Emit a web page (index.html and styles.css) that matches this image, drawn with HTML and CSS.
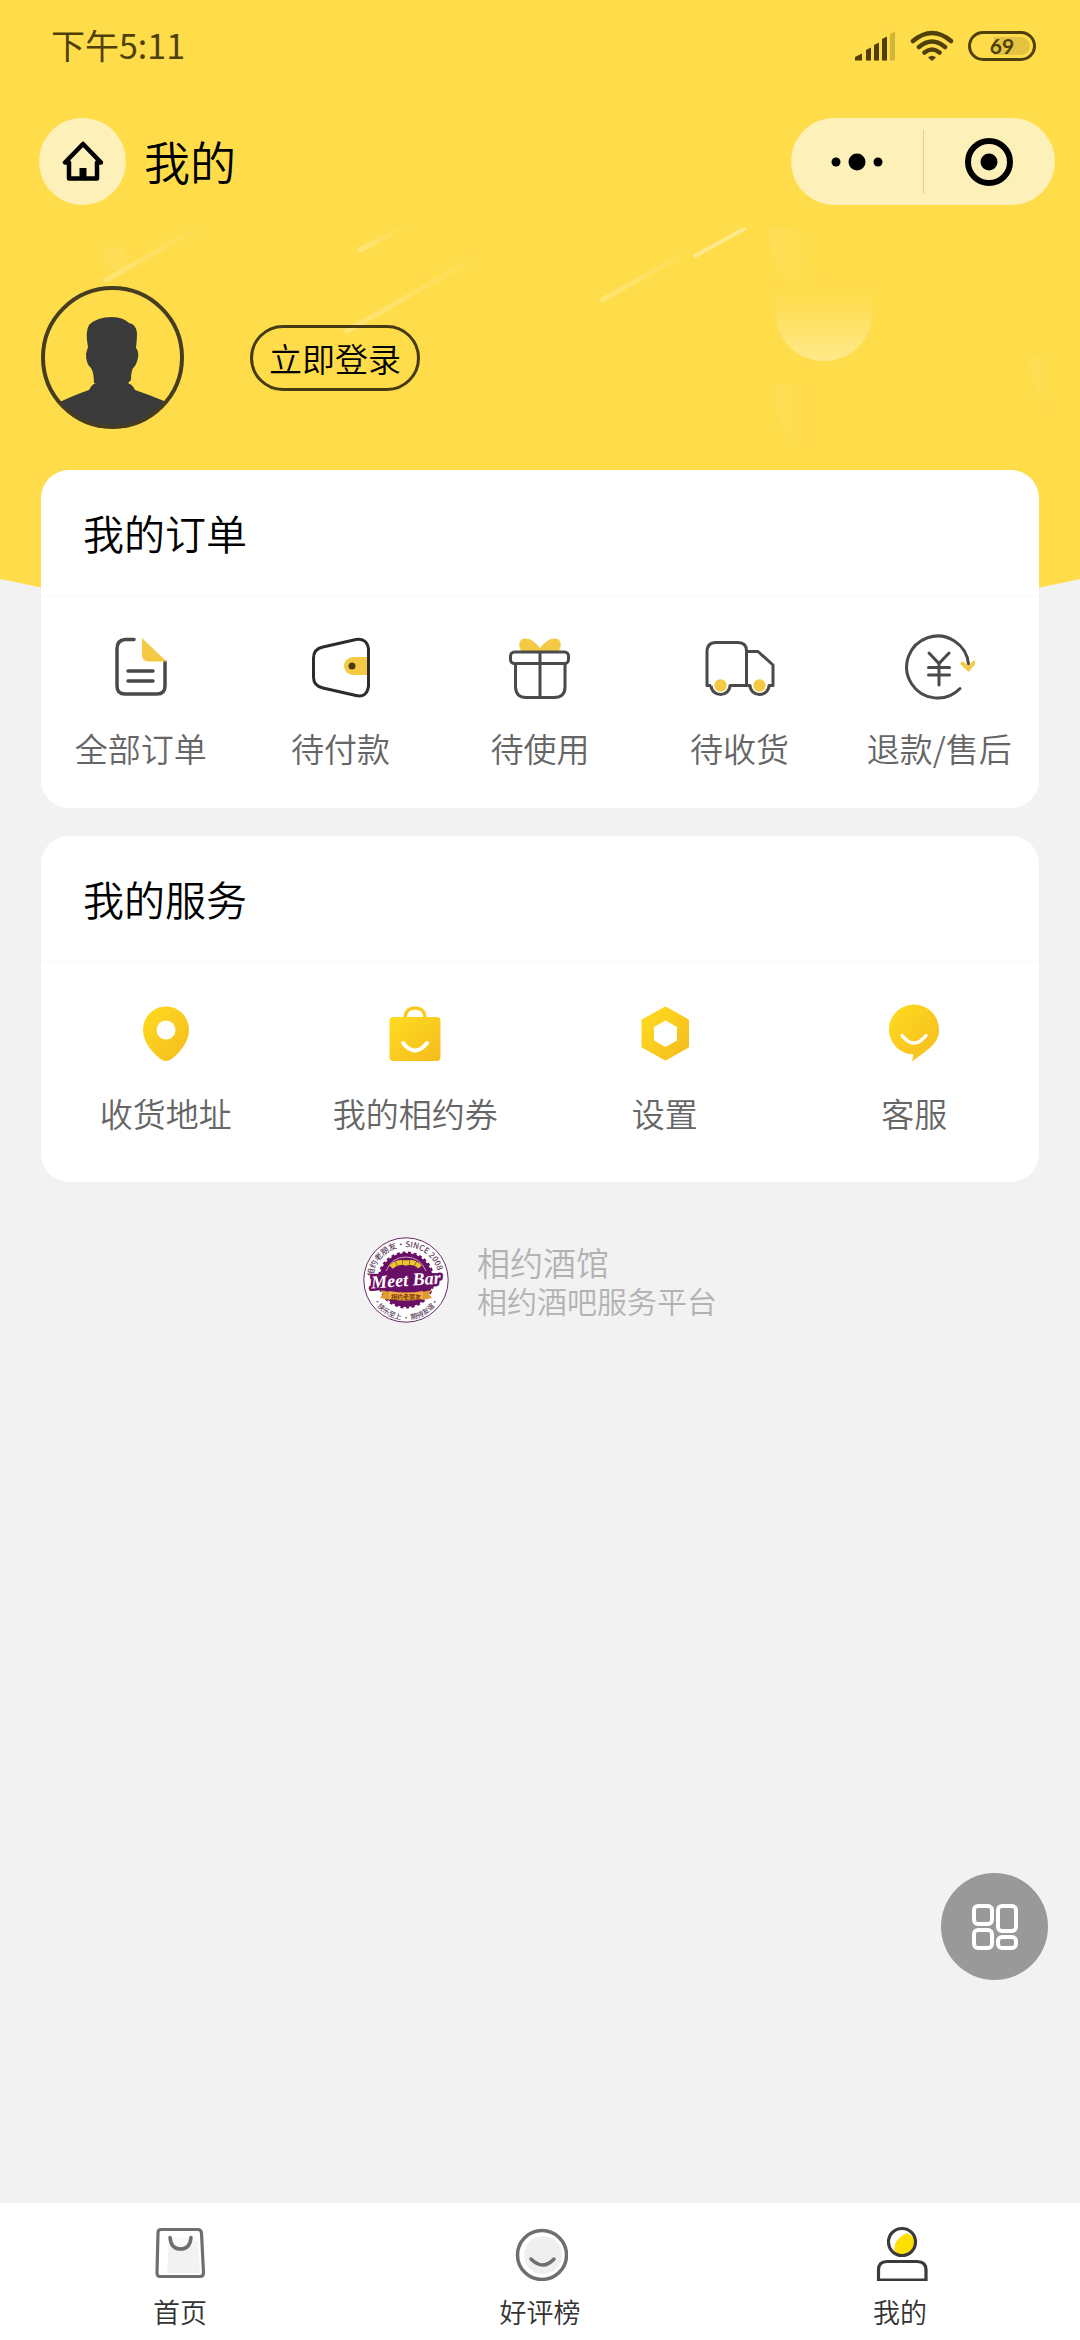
FILE: index.html
```
<!DOCTYPE html>
<html lang="zh-CN">
<head>
  <meta charset="UTF-8">
  <title>我的</title>
  <meta name="viewport" content="width=device-width, initial-scale=1.0">
  <link rel="stylesheet" href="styles.css">
</head>
<body>

<!-- Yellow header background -->
<svg class="header-bg" viewBox="0 0 1080 640" preserveAspectRatio="none" aria-hidden="true">
  <defs>
    <linearGradient id="ball" x1="0" y1="0" x2="0" y2="1">
      <stop offset="0" stop-color="#fff" stop-opacity="0"/>
      <stop offset="0.3" stop-color="#fff" stop-opacity="0.08"/>
      <stop offset="1" stop-color="#fff" stop-opacity="0.36"/>
    </linearGradient>
    <linearGradient id="streak" x1="0" y1="1" x2="1" y2="0">
      <stop offset="0" stop-color="#fff" stop-opacity="0.25"/>
      <stop offset="1" stop-color="#fff" stop-opacity="0.04"/>
    </linearGradient>
    <linearGradient id="haze" x1="0" y1="0" x2="1" y2="0">
      <stop offset="0" stop-color="#fff" stop-opacity="0.08"/>
      <stop offset="1" stop-color="#fff" stop-opacity="0"/>
    </linearGradient>
  </defs>
  <path d="M0 0H1080V579Q540 697 0 579Z" fill="#ffdc49"/>
  <g stroke="url(#streak)" stroke-width="5" stroke-linecap="round">
    <path d="M106 280L192 231"/>
    <path d="M360 250L400 229"/>
    <path d="M347 331L475 258"/>
    <path d="M602 300L688 252"/>
    <path d="M695 256L744 229" stroke="#fff" stroke-opacity="0.36" stroke-width="4"/>
  </g>
  <circle cx="115" cy="258" r="12" fill="#fff" fill-opacity="0.08"/>
  <path d="M775 285H873V312A49 49 0 0 1 775 312Z" fill="url(#ball)"/>
  <path d="M769 228H800Q800 262 830 284H792Q769 266 769 228Z" fill="url(#haze)"/>
  <path d="M775 384H800L815 418L800 446Q776 436 775 384Z" fill="url(#haze)"/>
  <path d="M1030 360Q1042 350 1056 364V412Q1032 398 1030 360Z" fill="url(#haze)"/>
</svg>

<header>
  <div class="status-bar">
    <span class="time">下午5:11</span>
    <div class="status-icons">
      <svg width="42" height="32" viewBox="0 0 42 32" fill="#4f3f08">
        <path d="M1 30.500V27L8 23.500V30.500ZM12 20L17 17.500V30.500H12ZM20 15L25 12.500V30.500H20ZM28 9L33 6.500V30.500H28Z"/>
        <path d="M36 4L41 1.500V30.500H36Z" opacity="0.25"/>
      </svg>
      <svg width="44" height="32" viewBox="0 0 44 32" fill="none" stroke="#4f3f08" stroke-width="4.500" stroke-linecap="round">
        <path d="M3 11Q22 -5 41 11M9 17Q22 6 35 17M14.500 22.500Q22 16.500 29.500 22.500"/>
        <path d="M22 31L18 27.500Q22 24 26 27.500Z" fill="#4f3f08" stroke="none"/>
      </svg>
      <span class="battery">69</span>
    </div>
  </div>

  <div class="navbar">
    <button class="home-btn" aria-label="返回首页">
      <svg width="44" height="42" viewBox="0 0 44 42">
        <path d="M22 3L4 21.500H8V37.500H36V21.500H40Z" fill="none" stroke="#000" stroke-width="4.500" stroke-linejoin="round"/>
        <rect x="18.500" y="27" width="7" height="11"/>
      </svg>
    </button>
    <h1>我的</h1>
    <div class="capsule">
      <button aria-label="更多">
        <svg width="54" height="20" viewBox="0 0 54 20"><circle cx="6" cy="10" r="4.500"/><circle cx="27" cy="10" r="8.500"/><circle cx="48" cy="10" r="4.500"/></svg>
      </button>
      <button aria-label="关闭">
        <svg width="50" height="50" viewBox="0 0 50 50"><circle cx="25" cy="25" r="21" fill="none" stroke="#000" stroke-width="6"/><circle cx="25" cy="25" r="8.500"/></svg>
      </button>
    </div>
  </div>
</header>

<main>
  <div class="profile">
    <svg class="avatar" viewBox="0 0 143 143">
      <defs><clipPath id="face"><circle cx="71.500" cy="71.500" r="71"/></clipPath></defs>
      <path clip-path="url(#face)" fill="#3a3a3a" d="M53 97Q53 87 50 82Q45 78 45 68Q46 64 47 61Q44 46 48 39Q56 31 71 31Q82 31 88 37Q95 38 96 47Q96 54 95 62Q98 65 97 72Q95 80 92 82Q90 86 90 94L87 97Q92 99 94 104Q109 109 123 115L143 123V143H0V123L21 115Q36 108 48 104Q51 98 55 97Z"/>
      <circle cx="71.500" cy="71.500" r="69.500" fill="none" stroke="#453d22" stroke-width="4"/>
    </svg>
    <button class="login-btn">立即登录</button>
  </div>

  <!-- Orders -->
  <section class="card">
    <h2>我的订单</h2>
    <div class="orders">
      <a href="#">
        <svg viewBox="0 0 72 72" fill="none" stroke="#4a4a4a" stroke-width="3.500" stroke-linecap="round">
          <path d="M29 8.500H20Q12 9 12 18V55Q12 63 20 63H52Q60 63 60 55V31"/>
          <path d="M23 40H48M23 50H48"/>
          <path d="M37 7L61.500 30.500H44Q37 30 37 24Z" fill="#f4c944" stroke="none"/>
        </svg>
        <span>全部订单</span>
      </a>
      <a href="#">
        <svg viewBox="0 0 72 72" fill="none" stroke="#2c2c2c" stroke-width="3">
          <path d="M63 26V44H49A9 9 0 0 1 49 26Z" fill="#f4c944" stroke="none"/>
          <path d="M19 16L52 8.500Q63 7 64.500 18V55Q63 67 52 64.500L19 57Q9.500 55 9.500 46V27Q9.500 18 19 16Z"/>
          <circle cx="48" cy="35" r="3.500" fill="#4a3c10" stroke="none"/>
        </svg>
        <span>待付款</span>
      </a>
      <a href="#">
        <svg viewBox="0 0 72 72" fill="none" stroke="#4a4a4a" stroke-width="3">
          <path d="M36 20H17Q13 12 18 8Q27 5 36 17Q45 5 54 8Q59 12 55 20Z" fill="#f4c944" stroke="none"/>
          <rect x="6.500" y="21" width="58" height="11.500" rx="4"/>
          <path d="M11.500 33V56Q12 66.500 22 66.500H50Q61 66.500 61 56V33M36 21V66"/>
        </svg>
        <span>待使用</span>
      </a>
      <a href="#">
        <svg viewBox="0 0 72 72" fill="none" stroke="#4a4a4a" stroke-width="3" stroke-linejoin="round">
          <path d="M7 54.500H3V21Q3 11.500 12 11.500H34Q42.500 11.500 42.500 20V54.500M42.500 20.500H54L69 34V54.500H65A9.500 9 0 0 1 46 54.500H26A9.500 9 0 0 1 7 54.500"/>
          <circle cx="16.500" cy="54.500" r="6.200" fill="#f4c944" stroke="none"/>
          <circle cx="55.500" cy="54.500" r="6.200" fill="#f4c944" stroke="none"/>
        </svg>
        <span>待收货</span>
      </a>
      <a href="#">
        <svg viewBox="0 0 72 72" fill="none" stroke="#4a4a4a" stroke-width="3" stroke-linecap="round">
          <path d="M57 57.500A31 31 0 1 1 65.500 33"/>
          <path d="M26 22L36 32.500L46 22M36 32.500V54M25.500 36.500H46.500M25.500 44H46.500"/>
          <path d="M59.500 32.500L65.500 38L71 31.500" stroke="#f4c944" stroke-width="4"/>
        </svg>
        <span>退款/售后</span>
      </a>
    </div>
  </section>

  <!-- Services -->
  <section class="card">
    <h2>我的服务</h2>
    <div class="services">
      <a href="#">
        <svg viewBox="0 0 60 60">
          <defs><linearGradient id="gold" x1="0" y1="0" x2="1" y2="1"><stop offset="0" stop-color="#ffdc20"/><stop offset="1" stop-color="#f5bb1e"/></linearGradient></defs>
          <path fill="url(#gold)" d="M30 3.500C43 3.500 53 14 53 27C53 39 43 51 34 57Q30 59 26 57C17 51 7 39 7 27C7 14 17 3.500 30 3.500Z"/>
          <circle cx="30" cy="27" r="9.500" fill="#fff"/>
        </svg>
        <span>收货地址</span>
      </a>
      <a href="#">
        <svg viewBox="0 0 60 60">
          <path d="M20 17V14Q21 5 30 5Q39 5 40 14V17" fill="none" stroke="#f9cb20" stroke-width="3.500"/>
          <rect x="4.500" y="14" width="51" height="44" rx="4" fill="url(#gold)"/>
          <path d="M22 14Q23 7 30 7Q37 7 38 14Z" fill="#fff"/>
          <path d="M18 40Q30 55 42 40" fill="none" stroke="#fff" stroke-width="4" stroke-linecap="round"/>
        </svg>
        <span>我的相约券</span>
      </a>
      <a href="#">
        <svg viewBox="0 0 60 60">
          <path fill="url(#gold)" stroke="url(#gold)" stroke-width="3" stroke-linejoin="round" d="M30.500 5L52.500 17.500V43.500L30.500 56L8 43.500V17.500Z"/>
          <path fill="#fff" stroke="#fff" stroke-width="2" stroke-linejoin="round" d="M30.500 18.500L41 24.500V37L30.500 43L20 37V24.500Z"/>
        </svg>
        <span>设置</span>
      </a>
      <a href="#">
        <svg viewBox="0 0 60 60">
          <path fill="url(#gold)" d="M30 1.500A25 25 0 0 1 55 27C55 41 43 47 28 58.500L29.500 51.500A25 25 0 0 1 5 27A25 25 0 0 1 30 1.500Z"/>
          <path d="M18 32.500Q30 47.500 42 32.500" fill="none" stroke="#fff" stroke-width="3.500" stroke-linecap="round"/>
        </svg>
        <span>客服</span>
      </a>
    </div>
  </section>

  <div class="brand">
    <svg class="brand-logo" viewBox="0 0 86 86">
      <defs>
        <path id="arcTop" d="M10 43A33 33 0 0 1 76 43"/>
        <path id="arcBottom" d="M6 46A37 37 0 0 0 80 46"/>
      </defs>
      <circle cx="43" cy="43" r="42.200" fill="#fff" stroke="#6b2a6b"/>
      <circle cx="43" cy="43" r="27" fill="#6a0f66"/>
      <circle cx="43" cy="43" r="27" fill="none" stroke="#6a0f66" stroke-width="3" stroke-dasharray="3 2.600"/>
      <path d="M23 34Q29 20 43 20Q57 20 63 34" fill="none" stroke="#c9a2c6"/>
      <path d="M28 30Q34 24 43 26Q52 24 57 30" fill="none" stroke="#e8c728" stroke-width="5" stroke-dasharray="6 0.500"/>
      <text class="logo-ring"><textPath href="#arcTop" startOffset="3">相约老朋友·SINCE 2008</textPath></text>
      <text class="logo-ring logo-ring-small"><textPath href="#arcBottom" startOffset="50%" text-anchor="middle">·快乐至上 · 期待友谊·</textPath></text>
      <path d="M17 53L27 55V63L17 61L20 57ZM69 53L59 55V63L69 61L66 57Z" fill="#e09a34"/>
      <path d="M26 54Q43 57 60 54V62Q43 65 26 62Z" fill="#f4ad3d"/>
      <text class="logo-name" x="43" y="49" text-anchor="middle" transform="rotate(-4 43 46)">Meet Bar</text>
      <text class="logo-ribbon" x="43" y="61.500" text-anchor="middle">相约老朋友</text>
    </svg>
    <div class="brand-text">
      <p class="brand-name">相约酒馆</p>
      <p class="brand-desc">相约酒吧服务平台</p>
    </div>
  </div>
</main>

<button class="fab" aria-label="快捷菜单">
  <svg width="46" height="46" viewBox="0 0 46 46" fill="none" stroke="#fff" stroke-width="4">
    <rect x="2" y="2" width="18" height="18" rx="4"/>
    <rect x="26" y="2" width="18" height="25" rx="4"/>
    <rect x="2" y="26" width="18" height="18" rx="4"/>
    <rect x="26" y="33" width="18" height="11" rx="4"/>
  </svg>
</button>

<nav class="tabbar">
  <a href="#">
    <svg viewBox="0 0 56 56" fill="none" stroke="#6e6e6e" stroke-width="3.200" stroke-linecap="round">
      <path d="M17 16H46L48 48H15Z" fill="#f3f2f2" stroke="none"/>
      <path d="M9 4.500H46Q49 4.500 49.500 8L51.500 48Q51.500 51.500 48 51.500H8Q5 51.500 5 48L6 8Q6 4.500 9 4.500Z"/>
      <path d="M18 12.500Q19 24 28.500 24Q38 24 39 12.500" fill="#fafafa" stroke-width="3.500"/>
    </svg>
    <span>首页</span>
  </a>
  <a href="#">
    <svg viewBox="0 0 56 56" fill="none" stroke="#6e6e6e" stroke-width="3.500" stroke-linecap="round">
      <circle cx="31" cy="30" r="19" fill="#efefef" stroke="none"/>
      <circle cx="30" cy="30" r="24.500"/>
      <path d="M19 34Q31 46 42 34"/>
    </svg>
    <span>好评榜</span>
  </a>
  <a href="#" aria-current="page">
    <svg viewBox="0 0 56 56" fill="none" stroke="#3a3a3a" stroke-width="3.200">
      <path d="M23 27Q20 15 35 8Q43 12 43 18Q41 29 30 30Q26 30 23 27Z" fill="#fddf02" stroke="none"/>
      <circle cx="30" cy="17" r="13.500"/>
      <path d="M6.500 55V45Q6.500 36.500 15 36.500H45Q54 36.500 54 45V55Z"/>
    </svg>
    <span>我的</span>
  </a>
</nav>

</body>
</html>
```
FILE: styles.css
```
* {
  box-sizing: border-box;
}

body {
  font-family: "Noto Sans CJK SC", "Noto Sans", sans-serif;
  font-weight: 350;
  margin: 0;
  min-height: 100vh;
  display: flex;
  flex-direction: column;
  position: relative;
  background-color: #f2f2f2;
  color: #000;
}

h1,
h2,
p {
  margin: 0;
  font-weight: 350;
}

a {
  color: inherit;
  text-decoration: none;
}

button {
  font-family: inherit;
  font-weight: 350;
  color: #000;
  padding: 0;
  border: none;
  background: none;
  cursor: pointer;
}

svg {
  display: block;
}

.header-bg {
  position: absolute;
  top: 0;
  left: 0;
  width: 100%;
  height: 640px;
  z-index: -1;
}

/* Status bar */
.status-bar {
  display: flex;
  justify-content: space-between;
  align-items: center;
  height: 92px;
  padding: 0 44px 0 51px;
}

.time {
  font-size: 34px;
  font-weight: 400;
  line-height: 48px;
  padding-bottom: 2px;
  color: #4f3f08;
}

.status-icons {
  display: flex;
  align-items: center;
  gap: 14px;
}

.battery {
  width: 68px;
  height: 30px;
  border: 3px solid #4f3f08;
  border-radius: 15px;
  background: linear-gradient(to right, transparent 35%, #e3c33f 35%) content-box;
  padding: 3px;
  font-family: Lato, sans-serif;
  font-size: 21px;
  font-weight: 700;
  line-height: 18px;
  text-align: center;
  color: #4f3f08;
}

/* Nav bar */
.navbar {
  display: flex;
  align-items: center;
  padding: 26px 25px 26px 39px;
}

.home-btn {
  display: flex;
  align-items: center;
  justify-content: center;
  width: 87px;
  height: 87px;
  border-radius: 50%;
  background-color: #fdf0b8;
}

.navbar h1 {
  flex: 1;
  margin-left: 18px;
  padding-bottom: 4px;
  font-size: 46px;
  line-height: 60px;
}

.capsule {
  display: flex;
  align-items: center;
  width: 264px;
  height: 87px;
  border-radius: 44px;
  background-color: #fdf0b8;
}

.capsule button {
  flex: 1;
  display: flex;
  align-items: center;
  justify-content: center;
  height: 64px;
}

.capsule button + button {
  border-left: 1px solid #dccf98;
}

/* Profile */
.profile {
  display: flex;
  align-items: center;
  gap: 66px;
  padding: 55px 41px 41px;
}

.avatar {
  width: 143px;
  height: 143px;
}

.login-btn {
  height: 66px;
  padding: 0 16px;
  border: 3px solid #453a12;
  border-radius: 33px;
  font-size: 33px;
  line-height: 48px;
}

/* Cards */
.card {
  margin: 0 41px 28px;
  border-radius: 28px;
  background-color: #fff;
}

.card h2 {
  padding: 32px 42px 33px;
  border-bottom: 1px solid #f9f9f9;
  font-size: 41px;
  line-height: 60px;
}

.orders,
.services {
  display: grid;
  font-size: 33px;
  line-height: 48px;
  color: #666;
}

.orders {
  grid-template-columns: repeat(5, 1fr);
  padding: 35px 0 36px;
}

.services {
  grid-template-columns: repeat(4, 1fr);
  padding: 41px 0 45px;
}

.orders a,
.services a {
  display: flex;
  flex-direction: column;
  align-items: center;
  white-space: nowrap;
}

.orders svg {
  width: 72px;
  height: 72px;
  margin-bottom: 21px;
}

.services svg {
  width: 60px;
  height: 60px;
  margin-bottom: 26px;
}

/* Brand */
.brand {
  display: flex;
  justify-content: center;
  align-items: flex-end;
  gap: 28px;
  margin-top: 55px;
  color: #b2b2b2;
}

.brand-logo {
  width: 86px;
  height: 86px;
}

.brand-text {
  padding-bottom: 4px;
  line-height: 38px;
}

.brand-name {
  font-size: 33px;
}

.brand-desc {
  font-size: 30px;
}

.logo-ring {
  font-size: 8px;
  font-weight: 500;
  fill: #5a3a5a;
}

.logo-ring-small {
  font-size: 7px;
}

.logo-name {
  font-family: "Liberation Serif", serif;
  font-size: 18px;
  font-style: italic;
  font-weight: 700;
  fill: #fff;
  stroke: #6a0f66;
  stroke-width: 5px;
  stroke-linejoin: round;
  paint-order: stroke;
}

.logo-ribbon {
  font-size: 6px;
  font-weight: 700;
  fill: #7a3a10;
}

/* Floating button */
.fab {
  position: fixed;
  right: 32px;
  bottom: 360px;
  display: flex;
  align-items: center;
  justify-content: center;
  width: 107px;
  height: 107px;
  border-radius: 50%;
  background-color: #999;
}

/* Tab bar */
.tabbar {
  display: flex;
  margin-top: auto;
  padding: 22px 0 10px;
  background-color: #fff;
  font-size: 27px;
  line-height: 36px;
  color: #333;
}

.tabbar a {
  flex: 1;
  display: flex;
  flex-direction: column;
  align-items: center;
}

.tabbar svg {
  width: 56px;
  height: 56px;
  margin-bottom: 13px;
}
```
